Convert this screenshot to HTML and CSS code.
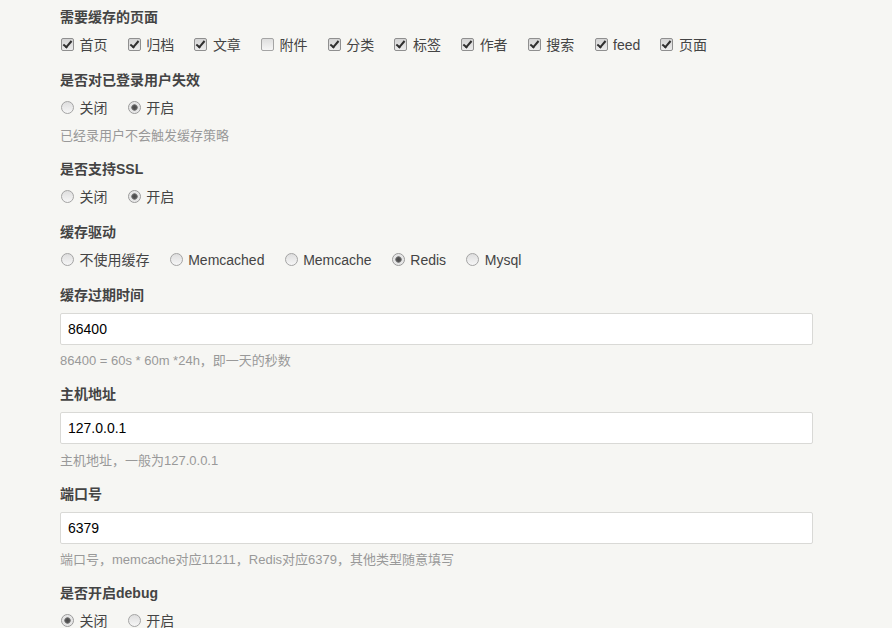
FILE: index.html
```html
<!DOCTYPE html>
<html>
	<head>
	<meta charset="utf-8">
	<title>缓存设置</title>
	<link rel="stylesheet" href="styles.css">
	</head>

	<body>
		<form class="typecho-form">

			<ul class="option">
				<li>
					<label class="option-label">需要缓存的页面</label>
					<div class="choices">
						<label class="choice"><input type="checkbox" checked> 首页</label>
						<label class="choice"><input type="checkbox" checked> 归档</label>
						<label class="choice"><input type="checkbox" checked> 文章</label>
						<label class="choice"><input type="checkbox"> 附件</label>
						<label class="choice"><input type="checkbox" checked> 分类</label>
						<label class="choice"><input type="checkbox" checked> 标签</label>
						<label class="choice"><input type="checkbox" checked> 作者</label>
						<label class="choice"><input type="checkbox" checked> 搜索</label>
						<label class="choice"><input type="checkbox" checked> feed</label>
						<label class="choice"><input type="checkbox" checked> 页面</label>
					</div>
				</li>
			</ul>

			<ul class="option">
				<li>
					<label class="option-label">是否对已登录用户失效</label>
					<div class="choices">
						<label class="choice"><input type="radio" name="login"> 关闭</label>
						<label class="choice"><input type="radio" name="login" checked> 开启</label>
					</div>
					<p class="description">已经录用户不会触发缓存策略</p>
				</li>
			</ul>

			<ul class="option">
				<li>
					<label class="option-label">是否支持SSL</label>
					<div class="choices">
						<label class="choice"><input type="radio" name="ssl"> 关闭</label>
						<label class="choice"><input type="radio" name="ssl" checked> 开启</label>
					</div>
				</li>
			</ul>

			<ul class="option">
				<li>
					<label class="option-label">缓存驱动</label>
					<div class="choices">
						<label class="choice"><input type="radio" name="driver"> 不使用缓存</label>
						<label class="choice"><input type="radio" name="driver"> Memcached</label>
						<label class="choice"><input type="radio" name="driver"> Memcache</label>
						<label class="choice"><input type="radio" name="driver" checked> Redis</label>
						<label class="choice"><input type="radio" name="driver"> Mysql</label>
					</div>
				</li>
			</ul>

			<ul class="option">
				<li>
					<label class="option-label">缓存过期时间</label>
					<input class="text-l" type="text" value="86400">
					<p class="description">86400 = 60s * 60m *24h，即一天的秒数</p>
				</li>
			</ul>

			<ul class="option">
				<li>
					<label class="option-label">主机地址</label>
					<input class="text-l" type="text" value="127.0.0.1">
					<p class="description">主机地址，一般为127.0.0.1</p>
				</li>
			</ul>

			<ul class="option">
				<li>
					<label class="option-label">端口号</label>
					<input class="text-l" type="text" value="6379">
					<p class="description">端口号，memcache对应11211，Redis对应6379，其他类型随意填写</p>
				</li>
			</ul>

			<ul class="option">
				<li>
					<label class="option-label">是否开启debug</label>
					<div class="choices">
						<label class="choice"><input type="radio" name="debug" checked> 关闭</label>
						<label class="choice"><input type="radio" name="debug"> 开启</label>
					</div>
				</li>
			</ul>

		</form>
	</body>
</html>
```

FILE: styles.css
```css
html, body {
	margin: 0;
	padding: 0;
	background: #f6f6f3;
}

body {
	font-family: "Liberation Sans", "Noto Sans CJK SC", sans-serif;
	font-size: 14px;
	line-height: 1.5;
	color: #444;
}

.typecho-form {
	width: 753px;
	padding: 7px 0 0 60px;
}

.option {
	list-style: none;
	margin: 14px 0;
	padding: 0;
}

.option:first-child {
	margin-top: 0;
}

.option-label {
	display: block;
	font-weight: bold;
	line-height: 21px;
	margin-bottom: 7px;
}

.choices {
	display: flex;
	height: 21px;
	line-height: 21px;
}

.choice {
	display: flex;
	align-items: center;
	margin-right: 19.2px;
}

.choice input {
	-webkit-appearance: none;
	appearance: none;
	position: relative;
	flex: none;
	width: 13px;
	height: 13px;
	margin: 0 5.5px 2px 1px;
	border: 1px solid #a4a4a4;
	box-sizing: border-box;
	background: linear-gradient(#dedede, #f6f6f6);
}

.choice input[type=checkbox] {
	border-radius: 2px;
}

.choice input[type=checkbox]:checked {
	border-color: #8f8f8f;
	background: linear-gradient(#d4d4d4, #ececec);
}

.choice input[type=checkbox]:checked::after {
	content: "";
	position: absolute;
	left: 3px;
	top: 0px;
	width: 3px;
	height: 7px;
	border: solid #2e2e2e;
	border-width: 0 2px 2px 0;
	transform: rotate(40deg);
}

.choice input[type=radio] {
	border-radius: 50%;
}

.choice input[type=radio]:checked {
	border-color: #9a9a9a;
	background: radial-gradient(circle, #4a4a4a 0, #555 2px, #8a8a8a 3px, #e2e2e2 3.5px, #f4f4f4 100%);
}

.text-l {
	display: block;
	width: 100%;
	height: 32px;
	margin: 0;
	padding: 0 7px;
	box-sizing: border-box;
	border: 1px solid #d9d9d6;
	border-radius: 2px;
	background: #fff;
	font-family: "Liberation Sans", "Noto Sans CJK SC", sans-serif;
	font-size: 14px;
	color: #000;
}

.description {
	margin: 6.5px 0 0;
	height: 19px;
	font-size: 13px;
	line-height: 19px;
	color: #999;
}
```
